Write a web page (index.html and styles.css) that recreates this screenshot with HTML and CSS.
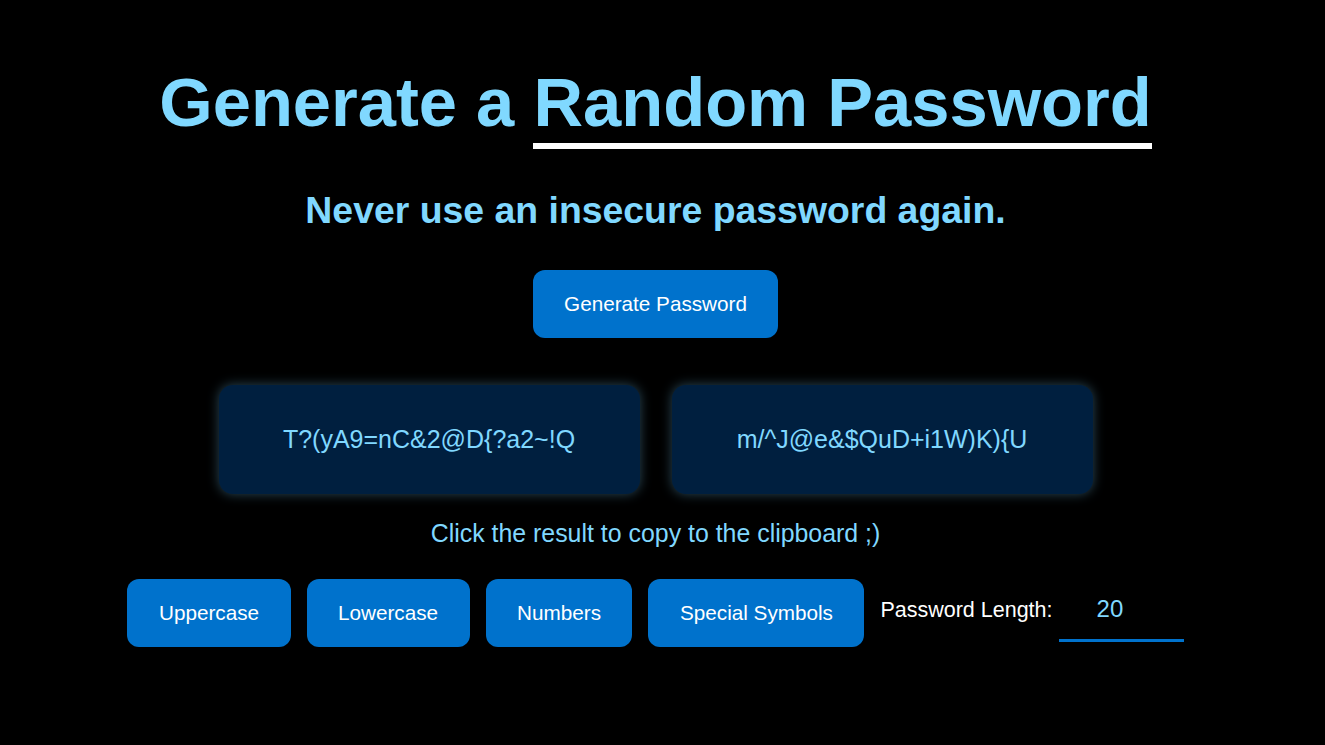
FILE: index.html
```html
<!DOCTYPE html>
<html lang="en">
<head>
<meta charset="utf-8">
<title>Random Password Generator</title>
<link rel="stylesheet" href="styles.css">
</head>
<body>
<main class="page">
  <h1 class="title">Generate a <span class="title-accent">Random Password</span></h1>
  <h2 class="subtitle">Never use an insecure password again.</h2>
  <button class="btn btn-generate" type="button">Generate Password</button>
  <div class="results">
    <div class="result">T?(yA9=nC&amp;2@D{?a2~!Q</div>
    <div class="result">m/^J@e&amp;$QuD+i1W)K){U</div>
  </div>
  <p class="hint">Click the result to copy to the clipboard ;)</p>
  <div class="options">
    <button class="btn" type="button">Uppercase</button>
    <button class="btn" type="button">Lowercase</button>
    <button class="btn" type="button">Numbers</button>
    <button class="btn" type="button">Special Symbols</button>
    <label class="length-label" for="len">Password Length:</label>
    <input class="length-input" id="len" type="text" value="20">
  </div>
</main>
</body>
</html>
```
FILE: styles.css
```css
html, body {
  margin: 0;
  padding: 0;
  background: #000;
  height: 100%;
}
body {
  font-family: "Liberation Sans", Arial, sans-serif;
  overflow: hidden;
}
.page {
  display: flex;
  flex-direction: column;
  align-items: center;
  padding-right: 14px;
}
.title {
  margin: 63px 0 0;
  font-size: 68.7px;
  font-weight: 700;
  line-height: 79px;
  color: #80d8ff;
  white-space: nowrap;
}
.title-accent {
  border-bottom: 6px solid #ffffff;
  padding-bottom: 2px;
}
.subtitle {
  margin: 47px 0 0;
  font-size: 37.4px;
  font-weight: 700;
  line-height: 43px;
  color: #80d8ff;
}
.btn {
  font-family: "Liberation Sans", Arial, sans-serif;
  font-size: 20.7px;
  line-height: 24px;
  color: #ffffff;
  background: #0072cc;
  border: none;
  border-radius: 12px;
  padding: 22px 31.5px;
  cursor: pointer;
}
.btn-generate {
  margin-top: 38px;
}
.results {
  display: flex;
  gap: 32px;
  margin-top: 47px;
}
.result {
  width: 421px;
  height: 109px;
  box-sizing: border-box;
  display: flex;
  align-items: center;
  justify-content: center;
  background: #001f3f;
  border-radius: 14px;
  color: #80d8ff;
  font-size: 25px;
  box-shadow: 0 0 12px rgba(110, 190, 230, 0.38);
}
.hint {
  margin: 25px 0 0;
  font-size: 24.9px;
  line-height: 29px;
  color: #80d8ff;
}
.options {
  display: flex;
  align-items: center;
  gap: 16px;
  margin-top: 31px;
}
.length-label {
  color: #ffffff;
  font-size: 21.5px;
  margin-top: -6px;
}
.length-input {
  margin-left: -10px;
  width: 125px;
  height: 58px;
  box-sizing: border-box;
  background: transparent;
  border: none;
  border-bottom: 3px solid #0072cc;
  color: #80d8ff;
  font-family: "Liberation Sans", Arial, sans-serif;
  font-size: 24px;
  padding: 0 0 6px 38px;
  outline: none;
}
```
